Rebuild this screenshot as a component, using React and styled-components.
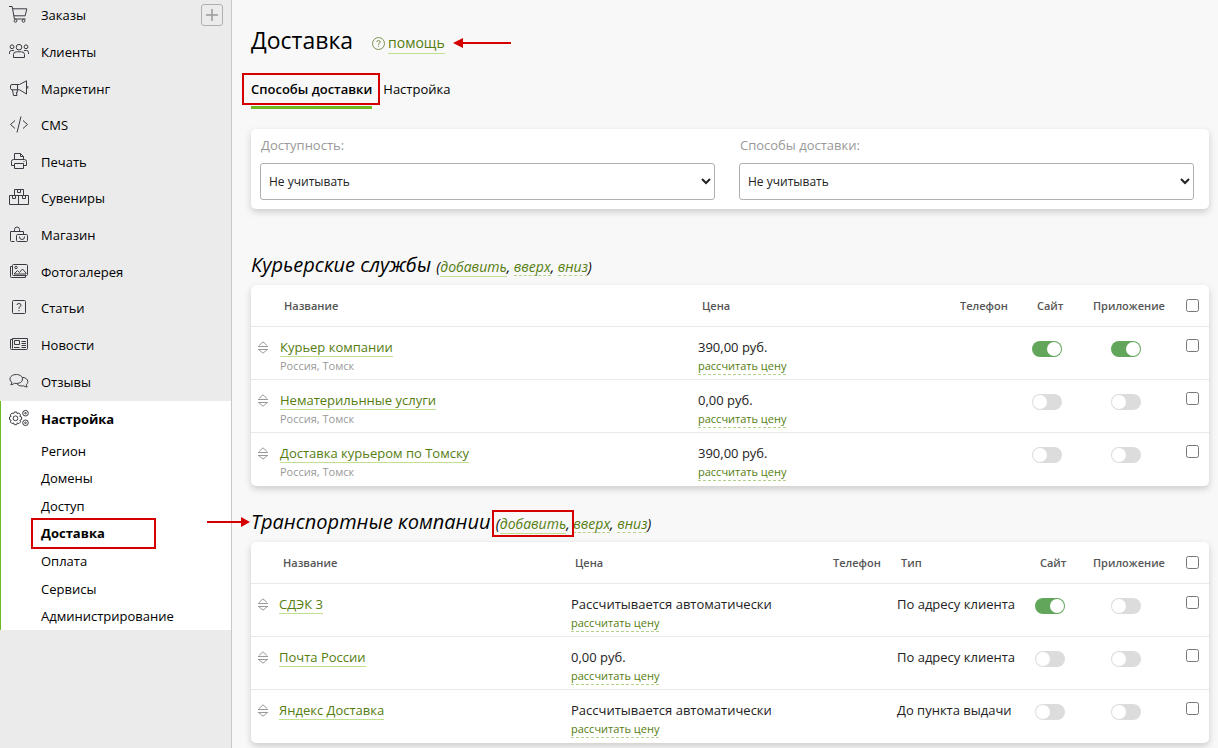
import React from "react";
import styled, { createGlobalStyle, css } from "styled-components";

const GlobalStyle = createGlobalStyle`
  *, *::before, *::after { box-sizing: border-box; }
  body {
    margin: 0;
    background: #f8f8f8;
    color: #000;
    font: 13px/20px "Open Sans", "Noto Sans", sans-serif;
  }
`;

const Page = styled.div`
  display: grid;
  grid-template-columns: 232px minmax(0, 1fr);
  min-height: 100vh;
`;

const Sidebar = styled.nav`
  background: #ebebeb;
  border-right: 1px solid #c8c8c8;
`;

const MenuList = styled.ul`
  display: grid;
  grid-auto-rows: 1fr;
  min-height: 403px;
  margin: -3px 0 1px;
  padding: 0;
  list-style: none;
`;

const MenuItem = styled.li`
  display: flex;
  align-items: center;
  justify-content: space-between;
  padding: 0 8px 0 9px;
`;

const MenuLink = styled.a`
  display: flex;
  align-items: center;
  gap: 12px;
  color: #000;
  text-decoration: none;
  font-weight: ${(p) => (p.$active ? 700 : 400)};
`;

const Icon = styled.svg`
  width: 20px;
  height: 20px;
  flex: none;
  fill: none;
  stroke: #3a3a42;
`;

const AddButton = styled.button`
  display: grid;
  place-items: center;
  width: 22px;
  height: 22px;
  padding: 0;
  border: 1px solid #b0b0b0;
  border-radius: 3px;
  background: transparent;
`;

const ActiveGroup = styled.div`
  background: #fff;
  border-left: 1px solid #6cbb23;
`;

const ActiveHead = styled.div`
  display: flex;
  align-items: center;
  height: 36px;
  padding-left: 8px;
`;

const SubList = styled.ul`
  display: grid;
  grid-auto-rows: 1fr;
  min-height: 193px;
  margin: 0;
  padding: 0 0 0 40px;
  list-style: none;
`;

const SubItem = styled.li`
  display: flex;
  align-items: center;
`;

const mark = css`
  position: relative;
  &::before {
    content: "";
    position: absolute;
    inset: ${(p) => p.$mark};
    border: 2px solid #d40000;
    pointer-events: none;
  }
`;

const SubLink = styled.a`
  color: #000;
  text-decoration: none;
  font-weight: ${(p) => (p.$active ? 700 : 400)};
  ${(p) => p.$mark && mark}
`;

const Main = styled.main`
  padding: 23px 9px 4px 19px;
`;

const TitleRow = styled.header`
  display: flex;
  align-items: center;
  gap: 19px;
`;

const Title = styled.h1`
  margin: 0;
  font-size: 23px;
  line-height: 34px;
  font-weight: 400;
`;

const Help = styled.span`
  display: flex;
  align-items: center;
  gap: 3px;
  padding-top: 7px;
  font-size: 14px;
`;

const HelpIcon = styled.svg`
  width: 13px;
  height: 13px;
  fill: none;
  stroke: #7d9254;
`;

const TextLink = styled.a`
  color: #557d10;
  text-decoration: none;
  border-bottom: 1px solid #bfe08f;
`;

const ActionLink = styled.button`
  padding: 0;
  border: 0;
  border-bottom: 1px dashed #b5d08a;
  background: none;
  color: #557d10;
  font: inherit;
  line-height: 16px;
`;

const Arrow = styled.svg`
  width: ${(p) => p.$width}px;
  height: 12px;
  fill: #d40000;
  stroke: #d40000;
`;

const HelpArrow = styled(Arrow)`
  margin: 0 0 2px 3px;
`;

const HeadingArrow = styled(Arrow)`
  position: absolute;
  left: -44px;
  top: 8px;
`;

const Tabs = styled.div`
  display: flex;
  gap: 11px;
  margin-top: 22px;
`;

const Tab = styled.button`
  height: 30px;
  padding: 0 0 7px;
  border: 0;
  border-bottom: 3px solid ${(p) => (p.$active ? "#6cbb23" : "transparent")};
  background: none;
  color: #000;
  font: inherit;
  font-weight: ${(p) => (p.$active ? 600 : 400)};
  ${(p) => p.$mark && mark}
`;

const Card = styled.section`
  border-radius: 5px;
  background: #fff;
  box-shadow: 0 3px 7px rgba(0, 0, 0, 0.18);
`;

const Filters = styled(Card)`
  display: grid;
  grid-template-columns: 1fr 1fr;
  gap: 24px;
  margin-top: 20px;
  padding: 6px 15px 9px 9px;
`;

const Field = styled.div`
  display: flex;
  flex-direction: column;
  gap: 8px;
`;

const FieldLabel = styled.label`
  padding-left: 1px;
  color: #999;
`;

const Select = styled.select`
  width: 100%;
  height: 37px;
  padding: 0 4px;
  border: 1px solid #b0b0b0;
  border-radius: 3px;
  background: #fff;
  color: #222;
  font: 12px "Open Sans", "Noto Sans", sans-serif;
`;

const Group = styled.section`
  margin-top: ${(p) => p.$gap}px;
`;

const GroupTitle = styled.h2`
  position: relative;
  margin: 0 0 4px;
  font-size: 20px;
  line-height: 28px;
  font-weight: 400;
  font-style: italic;
`;

const GroupActions = styled.small`
  font-size: 14px;
`;

const Marked = styled.span`
  ${(p) => p.$mark && mark}
`;

const Table = styled.table`
  width: 100%;
  table-layout: fixed;
  border-collapse: separate;
  border-spacing: 0;
  color: #222;
`;

const Col = styled.col`
  width: ${(p) => (p.$width ? `${p.$width}px` : "auto")};
`;

const HeadCell = styled.th`
  height: 42px;
  padding: 0 0 0 8px;
  border-bottom: 1px solid #e9e9e9;
  color: #555;
  font-size: 11px;
  font-weight: 600;
  text-align: left;
`;

const Cell = styled.td`
  height: 53px;
  padding: 10px 0 0 4px;
  vertical-align: top;
  white-space: nowrap;
  tr:not(:last-child) > & {
    border-bottom: 1px solid #e9e9e9;
  }
`;

const HandleCell = styled(Cell)`
  padding: 14px 0 0 7px;
`;

const ToggleCell = styled(Cell)`
  padding: 14px 0 0 ${(p) => p.$indent}px;
`;

const CheckCell = styled(Cell)`
  padding: 12px 0 0 8px;
`;

const Note = styled.div`
  color: #999;
  font-size: 11px;
  line-height: 18px;
`;

const HandleIcon = styled.svg`
  display: block;
  width: 10px;
  height: 13px;
  fill: none;
  stroke: #999;
`;

const Check = styled.input`
  display: block;
  width: 13px;
  height: 13px;
  margin: 0;
`;

const Toggle = styled.input`
  display: block;
  appearance: none;
  width: 30px;
  height: 16px;
  margin: 0;
  padding: 1px;
  border-radius: 8px;
  background: #dcdcdc;
  &::before {
    content: "";
    display: block;
    width: 14px;
    height: 14px;
    border-radius: 50%;
    background: #fff;
  }
  &:checked {
    background: #62a65c;
  }
  &:checked::before {
    margin-left: auto;
  }
`;

const icons = {
  cart: (
    <>
      <path d="M0 1.5H3.2L5.4 14H16.5M3.6 3.8H17.8L16.2 10.8H5" />
      <circle cx="6.5" cy="15.8" r="1.4" />
      <circle cx="14.5" cy="15.8" r="1.4" />
    </>
  ),
  people: (
    <>
      <circle cx="10" cy="5.2" r="2.8" />
      <circle cx="3" cy="4.8" r="1.9" />
      <circle cx="17" cy="4.8" r="1.9" />
      <path d="M4.5 15.5V12.5Q4.5 9.8 7.5 9.8H12.5Q15.5 9.8 15.5 12.5V15.5ZM.5 12V10.5Q.5 8.5 2.5 8.5H5M19.5 12V10.5Q19.5 8.5 17.5 8.5H15" />
    </>
  ),
  megaphone: (
    <path d="M10.5 5.5L17.5 1.8V15L10.5 10.8M10.5 5.5H3Q1.5 5.5 1.5 7V9.3Q1.5 10.8 3 10.8H10.5M3.5 10.8L4.5 16.5H8L7.3 13.5H8.3V10.8M8.5 5.5V10.8M18.8 7V9.5" />
  ),
  code: <path d="M6 5.5L1.5 9.5L6 13.5M14 5.5L18.5 9.5L14 13.5M12 1.5L8 17.5" />,
  printer: (
    <>
      <path d="M5.5 7.5V1.5H11.5L14.5 4.5V7.5M11.5 1.5V4.5H14.5M5.5 13.5H2.5V9.5Q2.5 7.5 4.5 7.5H15.5Q17.5 7.5 17.5 9.5V13.5H14.5M5.5 11.5H14.5V16.5H5.5Z" />
      <path d="M14.5 9.5H15.5" />
    </>
  ),
  boxes: (
    <path d="M5.5 7.5V1.5H14.5V7.5M8.5 1.5V4.5H11.5V1.5M.5 7.5H19.5V16.5H.5ZM9.5 7.5V16.5M3.5 7.5V10.5H6.5V7.5M13.5 7.5V10.5H16.5V7.5" />
  ),
  shop: (
    <>
      <path d="M5.5 16.5H2.5Q1.5 16.5 1.5 15.5V6.5H14.5V9.5M5.5 6.5V4.5A2.5 2.5 0 0 1 10.5 4.5V6.5" />
      <rect x="7.5" y="9.5" width="11" height="7" rx="1" />
      <path d="M10.5 11.5V12A2.5 2.5 0 0 0 15.5 12V11.5" />
    </>
  ),
  gallery: (
    <>
      <rect x="3.5" y="2.5" width="15" height="11" rx="1" />
      <path d="M3 4.5H1.5V14.5Q1.5 15.5 2.5 15.5H16.5V14M5 12L8.5 8.5L10.5 10.5L13.5 7L17 11V12Z" />
      <circle cx="7" cy="5.5" r="1.2" />
    </>
  ),
  question: (
    <>
      <rect x="3.5" y="2.5" width="13" height="13" rx="1" />
      <path d="M8 7Q8 5.5 10 5.5T12 7.2Q12 8.3 10 9.5V10.8M10 12V13.2" />
    </>
  ),
  news: (
    <>
      <path d="M3.5 3.5H18.5V13.5Q18.5 14.5 17.5 14.5H2.5Q1.5 14.5 1.5 13.5V4.5H3.5ZM3.5 3.5V13.5" />
      <path d="M5.5 5.5H10.5V9.5H5.5ZM5 12.5H10.5M12.5 6.5H17M12.5 8.5H17M12.5 10.5H17M12.5 12.5H17" />
    </>
  ),
  chat: (
    <path d="M7.5 2.5C3.5 2.5 1 4.5 1 7C1 8.5 1.7 9.6 3 10.4L1.8 12.8C3.5 12.6 4.6 12 5.5 11.3C10.5 12 13.5 10 13.5 7C13.5 4.5 11 2.5 7.5 2.5ZM13.3 5.3C16.7 5.6 18.8 7.2 18.8 9.6C18.8 11 18.2 12 17.2 12.8L18.2 15C16.7 15 15.7 14.6 14.6 13.9C11.5 14.4 8.7 13.3 7.6 11.5" />
  ),
  gears: (
    <>
      <path d="M5.3 3H7.7L8.2 4.7L9.8 4L11.6 5.8L10.8 7.4L12.6 8V10.6L10.8 11.2L11.6 12.9L9.8 14.7L8.2 13.9L7.7 15.7H5.3L4.7 13.9L3.1 14.7L1.3 12.9L2.1 11.2L.5 10.6V8L2.1 7.4L1.3 5.8L3.1 4L4.7 4.7Z" />
      <circle cx="6.5" cy="9.3" r="2.4" />
      <circle cx="16.5" cy="4.2" r="2.8" />
      <circle cx="16.5" cy="4.2" r=".8" />
      <circle cx="16.5" cy="13.8" r="2.8" />
      <circle cx="16.5" cy="13.8" r=".8" />
    </>
  ),
};

const menu = [
  ["cart", "Заказы"],
  ["people", "Клиенты"],
  ["megaphone", "Маркетинг"],
  ["code", "CMS"],
  ["printer", "Печать"],
  ["boxes", "Сувениры"],
  ["shop", "Магазин"],
  ["gallery", "Фотогалерея"],
  ["question", "Статьи"],
  ["news", "Новости"],
  ["chat", "Отзывы"],
];

const submenu = ["Регион", "Домены", "Доступ", "Доставка", "Оплата", "Сервисы", "Администрирование"];

const couriers = [
  { name: "Курьер компании", note: "Россия, Томск", price: "390,00 руб.", site: true, app: true },
  { name: "Нематерильнные услуги", note: "Россия, Томск", price: "0,00 руб." },
  { name: "Доставка курьером по Томску", note: "Россия, Томск", price: "390,00 руб." },
];

const carriers = [
  { name: "СДЭК 3", price: "Рассчитывается автоматически", type: "По адресу клиента", site: true },
  { name: "Почта России", price: "0,00 руб.", type: "По адресу клиента" },
  { name: "Яндекс Доставка", price: "Рассчитывается автоматически", type: "До пункта выдачи" },
];

function MenuIcon({ name }) {
  return (
    <Icon viewBox="0 0 20 20" aria-hidden="true">
      {icons[name]}
    </Icon>
  );
}

function FilterField({ id, label }) {
  return (
    <Field>
      <FieldLabel htmlFor={id}>{label}</FieldLabel>
      <Select id={id}>
        <option>Не учитывать</option>
      </Select>
    </Field>
  );
}

function DeliveryTable({ rows, widths, hasType }) {
  return (
    <Card>
      <Table>
        <colgroup>
          {widths.map((w, i) => (
            <Col key={i} $width={w} />
          ))}
        </colgroup>
        <thead>
          <tr>
            <HeadCell aria-label="Порядок" />
            <HeadCell>Название</HeadCell>
            <HeadCell>Цена</HeadCell>
            <HeadCell>Телефон</HeadCell>
            {hasType && <HeadCell>Тип</HeadCell>}
            <HeadCell>Сайт</HeadCell>
            <HeadCell>Приложение</HeadCell>
            <HeadCell>
              <Check type="checkbox" aria-label="Выбрать все" />
            </HeadCell>
          </tr>
        </thead>
        <tbody>
          {rows.map((row) => (
            <tr key={row.name}>
              <HandleCell>
                <HandleIcon viewBox="0 0 10 13" aria-hidden="true">
                  <path d="M1 4.5L5 .8L9 4.5M0 5.5H10M0 8.5H10M1 8.8L5 12.2L9 8.8" />
                </HandleIcon>
              </HandleCell>
              <Cell>
                <TextLink href="#edit">{row.name}</TextLink>
                {row.note && <Note>{row.note}</Note>}
              </Cell>
              <Cell>
                {row.price}
                <Note>
                  <ActionLink type="button">рассчитать цену</ActionLink>
                </Note>
              </Cell>
              <Cell />
              {hasType && <Cell>{row.type}</Cell>}
              <ToggleCell $indent={3}>
                <Toggle type="checkbox" defaultChecked={row.site} aria-label={`${row.name}: сайт`} />
              </ToggleCell>
              <ToggleCell $indent={26}>
                <Toggle type="checkbox" defaultChecked={row.app} aria-label={`${row.name}: приложение`} />
              </ToggleCell>
              <CheckCell>
                <Check type="checkbox" aria-label={`Выбрать: ${row.name}`} />
              </CheckCell>
            </tr>
          ))}
        </tbody>
      </Table>
    </Card>
  );
}

function GroupHeading({ title, marked }) {
  return (
    <GroupTitle>
      {marked && (
        <HeadingArrow $width={44} viewBox="0 0 44 12" aria-hidden="true">
          <path d="M0 6H36" strokeWidth="2" />
          <path d="M34 1L43 6L34 11Z" stroke="none" />
        </HeadingArrow>
      )}
      {title}{" "}
      <GroupActions>
        <Marked $mark={marked ? "-4px -4px -4px -4px" : undefined}>
          (<TextLink href="#add">добавить</TextLink>,
        </Marked>{" "}
        <ActionLink type="button">вверх</ActionLink>, <ActionLink type="button">вниз</ActionLink>)
      </GroupActions>
    </GroupTitle>
  );
}

export default function App() {
  return (
    <>
      <GlobalStyle />
      <Page>
        <Sidebar>
          <MenuList>
            {menu.map(([icon, label], i) => (
              <MenuItem key={label}>
                <MenuLink href="#menu">
                  <MenuIcon name={icon} />
                  {label}
                </MenuLink>
                {i === 0 && (
                  <AddButton type="button" aria-label="Добавить заказ">
                    <svg width="12" height="12" stroke="#999" aria-hidden="true">
                      <path d="M6 0V12M0 6H12" strokeWidth="1.5" />
                    </svg>
                  </AddButton>
                )}
              </MenuItem>
            ))}
          </MenuList>
          <ActiveGroup>
            <ActiveHead>
              <MenuLink href="#settings" $active>
                <MenuIcon name="gears" />
                Настройка
              </MenuLink>
            </ActiveHead>
            <SubList>
              {submenu.map((label) => {
                const active = label === "Доставка";
                return (
                  <SubItem key={label}>
                    <SubLink href="#sub" $active={active} $mark={active ? "-5px -51px -6px -10px" : undefined}>
                      {label}
                    </SubLink>
                  </SubItem>
                );
              })}
            </SubList>
          </ActiveGroup>
        </Sidebar>
        <Main>
          <TitleRow>
            <Title>Доставка</Title>
            <Help>
              <HelpIcon viewBox="0 0 13 13" aria-hidden="true">
                <circle cx="6.5" cy="6.5" r="6" />
                <path d="M4.8 5Q4.8 3.5 6.5 3.5T8.2 5Q8.2 6 6.5 6.8V7.8M6.5 8.8V9.8" />
              </HelpIcon>
              <TextLink href="#help">помощь</TextLink>
              <HelpArrow $width={60} viewBox="0 0 60 12" aria-hidden="true">
                <path d="M9 6H60" strokeWidth="2" />
                <path d="M12 1L2 6L12 11Z" stroke="none" />
              </HelpArrow>
            </Help>
          </TitleRow>
          <Tabs>
            <Tab type="button" $active $mark="-6px -8px 1px -9px">
              Способы доставки
            </Tab>
            <Tab type="button">Настройка</Tab>
          </Tabs>
          <Filters>
            <FilterField id="availability" label="Доступность:" />
            <FilterField id="methods" label="Способы доставки:" />
          </Filters>
          <Group $gap={42}>
            <GroupHeading title="Курьерские службы" />
            <DeliveryTable rows={couriers} widths={[25, 0, 258, 77, 56, 93, 31]} />
          </Group>
          <Group $gap={22}>
            <GroupHeading title="Транспортные компании" marked />
            <DeliveryTable rows={carriers} widths={[24, 0, 258, 68, 139, 53, 93, 31]} hasType />
          </Group>
        </Main>
      </Page>
    </>
  );
}
